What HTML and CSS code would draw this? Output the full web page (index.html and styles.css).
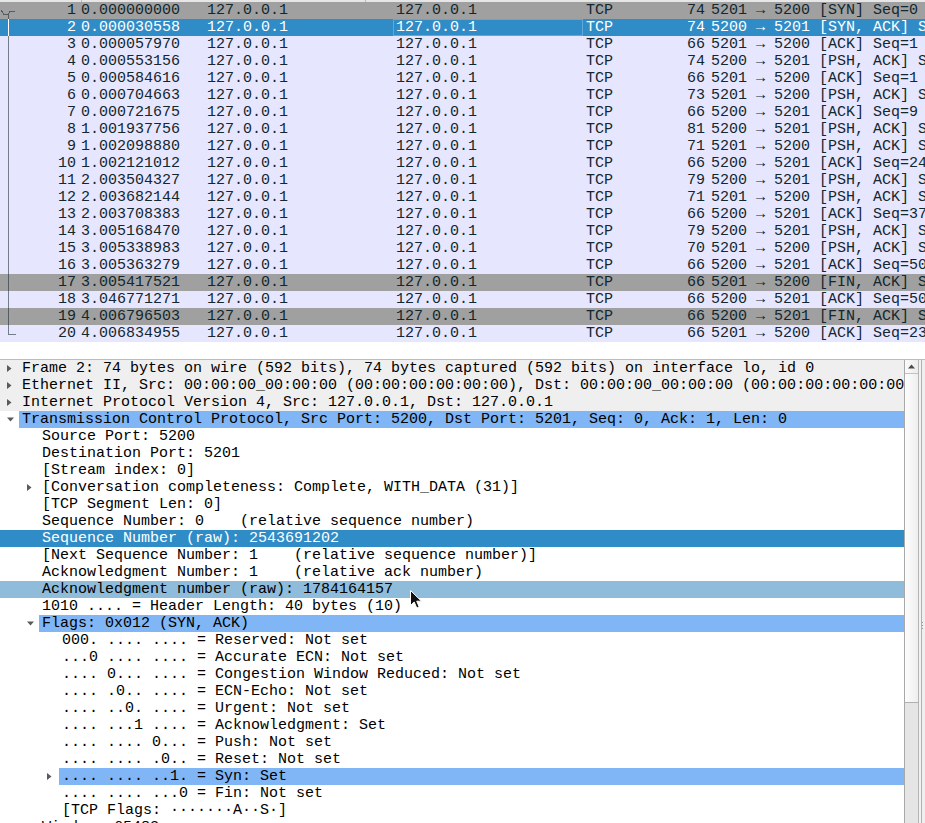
FILE: index.html
```html
<!DOCTYPE html>
<html>
<head>
<meta charset="utf-8">
<link rel="stylesheet" href="styles.css">
</head>
<body>
<div class="window">
  <div class="plist">
    <div class="phead"><span class="hs hs1"></span><span class="hs hs2"></span></div>
    <div class="prow gray"><span class="c no"><svg class="mk" width="16" height="17"><path d="M1,8 L4,12.5 L8,12.5 L10,9 L15,9 M8,12.5 L8,17"/></svg><span>1</span></span><span class="c">0.000000000</span><span class="c">127.0.0.1</span><span class="c">127.0.0.1</span><span class="c">TCP</span><span class="c len">74</span><span class="c">5201 → 5200 [SYN] Seq=0 Win=65495 Len=0 MSS=65495</span></div>
    <div class="prow sel"><span class="c no"><svg class="mk" width="16" height="17"><path d="M8,0 L8,17"/></svg><span>2</span></span><span class="c">0.000030558</span><span class="c">127.0.0.1</span><span class="c focus">127.0.0.1</span><span class="c">TCP</span><span class="c len">74</span><span class="c">5200 → 5201 [SYN, ACK] Seq=0 Ack=1 Win=65483 Len=0</span></div>
    <div class="prow"><span class="c no"><svg class="mk" width="16" height="17"><path d="M8,0 L8,17"/></svg><span>3</span></span><span class="c">0.000057970</span><span class="c">127.0.0.1</span><span class="c">127.0.0.1</span><span class="c">TCP</span><span class="c len">66</span><span class="c">5201 → 5200 [ACK] Seq=1 Ack=1 Win=65536 Len=0</span></div>
    <div class="prow"><span class="c no"><svg class="mk" width="16" height="17"><path d="M8,0 L8,17"/></svg><span>4</span></span><span class="c">0.000553156</span><span class="c">127.0.0.1</span><span class="c">127.0.0.1</span><span class="c">TCP</span><span class="c len">74</span><span class="c">5200 → 5201 [PSH, ACK] Seq=1 Ack=1 Win=65536 Len=8</span></div>
    <div class="prow"><span class="c no"><svg class="mk" width="16" height="17"><path d="M8,0 L8,17"/></svg><span>5</span></span><span class="c">0.000584616</span><span class="c">127.0.0.1</span><span class="c">127.0.0.1</span><span class="c">TCP</span><span class="c len">66</span><span class="c">5201 → 5200 [ACK] Seq=1 Ack=9 Win=65536 Len=0</span></div>
    <div class="prow"><span class="c no"><svg class="mk" width="16" height="17"><path d="M8,0 L8,17"/></svg><span>6</span></span><span class="c">0.000704663</span><span class="c">127.0.0.1</span><span class="c">127.0.0.1</span><span class="c">TCP</span><span class="c len">73</span><span class="c">5201 → 5200 [PSH, ACK] Seq=1 Ack=9 Win=65536 Len=7</span></div>
    <div class="prow"><span class="c no"><svg class="mk" width="16" height="17"><path d="M8,0 L8,17"/></svg><span>7</span></span><span class="c">0.000721675</span><span class="c">127.0.0.1</span><span class="c">127.0.0.1</span><span class="c">TCP</span><span class="c len">66</span><span class="c">5200 → 5201 [ACK] Seq=9 Ack=8 Win=65536 Len=0</span></div>
    <div class="prow"><span class="c no"><svg class="mk" width="16" height="17"><path d="M8,0 L8,17"/></svg><span>8</span></span><span class="c">1.001937756</span><span class="c">127.0.0.1</span><span class="c">127.0.0.1</span><span class="c">TCP</span><span class="c len">81</span><span class="c">5200 → 5201 [PSH, ACK] Seq=9 Ack=8 Win=65536 Len=15</span></div>
    <div class="prow"><span class="c no"><svg class="mk" width="16" height="17"><path d="M8,0 L8,17"/></svg><span>9</span></span><span class="c">1.002098880</span><span class="c">127.0.0.1</span><span class="c">127.0.0.1</span><span class="c">TCP</span><span class="c len">71</span><span class="c">5201 → 5200 [PSH, ACK] Seq=8 Ack=24 Win=65536 Len=5</span></div>
    <div class="prow"><span class="c no"><svg class="mk" width="16" height="17"><path d="M8,0 L8,17"/></svg><span>10</span></span><span class="c">1.002121012</span><span class="c">127.0.0.1</span><span class="c">127.0.0.1</span><span class="c">TCP</span><span class="c len">66</span><span class="c">5200 → 5201 [ACK] Seq=24 Ack=13 Win=65536 Len=0</span></div>
    <div class="prow"><span class="c no"><svg class="mk" width="16" height="17"><path d="M8,0 L8,17"/></svg><span>11</span></span><span class="c">2.003504327</span><span class="c">127.0.0.1</span><span class="c">127.0.0.1</span><span class="c">TCP</span><span class="c len">79</span><span class="c">5200 → 5201 [PSH, ACK] Seq=24 Ack=13 Win=65536 Len=13</span></div>
    <div class="prow"><span class="c no"><svg class="mk" width="16" height="17"><path d="M8,0 L8,17"/></svg><span>12</span></span><span class="c">2.003682144</span><span class="c">127.0.0.1</span><span class="c">127.0.0.1</span><span class="c">TCP</span><span class="c len">71</span><span class="c">5201 → 5200 [PSH, ACK] Seq=13 Ack=37 Win=65536 Len=5</span></div>
    <div class="prow"><span class="c no"><svg class="mk" width="16" height="17"><path d="M8,0 L8,17"/></svg><span>13</span></span><span class="c">2.003708383</span><span class="c">127.0.0.1</span><span class="c">127.0.0.1</span><span class="c">TCP</span><span class="c len">66</span><span class="c">5200 → 5201 [ACK] Seq=37 Ack=18 Win=65536 Len=0</span></div>
    <div class="prow"><span class="c no"><svg class="mk" width="16" height="17"><path d="M8,0 L8,17"/></svg><span>14</span></span><span class="c">3.005168470</span><span class="c">127.0.0.1</span><span class="c">127.0.0.1</span><span class="c">TCP</span><span class="c len">79</span><span class="c">5200 → 5201 [PSH, ACK] Seq=37 Ack=18 Win=65536 Len=13</span></div>
    <div class="prow"><span class="c no"><svg class="mk" width="16" height="17"><path d="M8,0 L8,17"/></svg><span>15</span></span><span class="c">3.005338983</span><span class="c">127.0.0.1</span><span class="c">127.0.0.1</span><span class="c">TCP</span><span class="c len">70</span><span class="c">5201 → 5200 [PSH, ACK] Seq=18 Ack=50 Win=65536 Len=4</span></div>
    <div class="prow"><span class="c no"><svg class="mk" width="16" height="17"><path d="M8,0 L8,17"/></svg><span>16</span></span><span class="c">3.005363279</span><span class="c">127.0.0.1</span><span class="c">127.0.0.1</span><span class="c">TCP</span><span class="c len">66</span><span class="c">5200 → 5201 [ACK] Seq=50 Ack=22 Win=65536 Len=0</span></div>
    <div class="prow gray"><span class="c no"><svg class="mk" width="16" height="17"><path d="M8,0 L8,17"/></svg><span>17</span></span><span class="c">3.005417521</span><span class="c">127.0.0.1</span><span class="c">127.0.0.1</span><span class="c">TCP</span><span class="c len">66</span><span class="c">5201 → 5200 [FIN, ACK] Seq=22 Ack=50 Win=65536 Len=0</span></div>
    <div class="prow"><span class="c no"><svg class="mk" width="16" height="17"><path d="M8,0 L8,17"/></svg><span>18</span></span><span class="c">3.046771271</span><span class="c">127.0.0.1</span><span class="c">127.0.0.1</span><span class="c">TCP</span><span class="c len">66</span><span class="c">5200 → 5201 [ACK] Seq=50 Ack=23 Win=65536 Len=0</span></div>
    <div class="prow gray"><span class="c no"><svg class="mk" width="16" height="17"><path d="M8,0 L8,17"/></svg><span>19</span></span><span class="c">4.006796503</span><span class="c">127.0.0.1</span><span class="c">127.0.0.1</span><span class="c">TCP</span><span class="c len">66</span><span class="c">5200 → 5201 [FIN, ACK] Seq=50 Ack=23 Win=65536 Len=0</span></div>
    <div class="prow"><span class="c no"><svg class="mk" width="16" height="17"><path d="M8,0 L8,9 L16,9"/></svg><span>20</span></span><span class="c">4.006834955</span><span class="c">127.0.0.1</span><span class="c">127.0.0.1</span><span class="c">TCP</span><span class="c len">66</span><span class="c">5201 → 5200 [ACK] Seq=23 Ack=51 Win=65536 Len=0</span></div>
  </div>

  <div class="details">
    <div class="tree">
      <div class="trow top"><span class="exp"><svg class="ar" width="5" height="7"><path d="M0,0 L4.5,3.5 L0,7 Z"/></svg></span><span class="cell">Frame 2: 74 bytes on wire (592 bits), 74 bytes captured (592 bits) on interface lo, id 0</span></div>
      <div class="trow top"><span class="exp"><svg class="ar" width="5" height="7"><path d="M0,0 L4.5,3.5 L0,7 Z"/></svg></span><span class="cell">Ethernet II, Src: 00:00:00_00:00:00 (00:00:00:00:00:00), Dst: 00:00:00_00:00:00 (00:00:00:00:00:00)</span></div>
      <div class="trow top"><span class="exp"><svg class="ar" width="5" height="7"><path d="M0,0 L4.5,3.5 L0,7 Z"/></svg></span><span class="cell">Internet Protocol Version 4, Src: 127.0.0.1, Dst: 127.0.0.1</span></div>
      <div class="trow hl"><span class="exp"><svg class="ar" width="7" height="5"><path d="M0,0.5 L7,0.5 L3.5,4.5 Z"/></svg></span><span class="cell">Transmission Control Protocol, Src Port: 5200, Dst Port: 5201, Seq: 0, Ack: 1, Len: 0</span></div>
      <div class="trow"><span class="ind l1"></span><span class="exp"></span><span class="cell">Source Port: 5200</span></div>
      <div class="trow"><span class="ind l1"></span><span class="exp"></span><span class="cell">Destination Port: 5201</span></div>
      <div class="trow"><span class="ind l1"></span><span class="exp"></span><span class="cell">[Stream index: 0]</span></div>
      <div class="trow"><span class="ind l1"></span><span class="exp"><svg class="ar" width="5" height="7"><path d="M0,0 L4.5,3.5 L0,7 Z"/></svg></span><span class="cell">[Conversation completeness: Complete, WITH_DATA (31)]</span></div>
      <div class="trow"><span class="ind l1"></span><span class="exp"></span><span class="cell">[TCP Segment Len: 0]</span></div>
      <div class="trow"><span class="ind l1"></span><span class="exp"></span><span class="cell">Sequence Number: 0    (relative sequence number)</span></div>
      <div class="trow sel"><span class="ind l1"></span><span class="exp"></span><span class="cell">Sequence Number (raw): 2543691202</span></div>
      <div class="trow"><span class="ind l1"></span><span class="exp"></span><span class="cell">[Next Sequence Number: 1    (relative sequence number)]</span></div>
      <div class="trow"><span class="ind l1"></span><span class="exp"></span><span class="cell">Acknowledgment Number: 1    (relative ack number)</span></div>
      <div class="trow hover"><span class="ind l1"></span><span class="exp"></span><span class="cell">Acknowledgment number (raw): 1784164157</span></div>
      <div class="trow"><span class="ind l1"></span><span class="exp"></span><span class="cell">1010 .... = Header Length: 40 bytes (10)</span></div>
      <div class="trow hl"><span class="ind l1"></span><span class="exp"><svg class="ar" width="7" height="5"><path d="M0,0.5 L7,0.5 L3.5,4.5 Z"/></svg></span><span class="cell">Flags: 0x012 (SYN, ACK)</span></div>
      <div class="trow"><span class="ind l2"></span><span class="exp"></span><span class="cell">000. .... .... = Reserved: Not set</span></div>
      <div class="trow"><span class="ind l2"></span><span class="exp"></span><span class="cell">...0 .... .... = Accurate ECN: Not set</span></div>
      <div class="trow"><span class="ind l2"></span><span class="exp"></span><span class="cell">.... 0... .... = Congestion Window Reduced: Not set</span></div>
      <div class="trow"><span class="ind l2"></span><span class="exp"></span><span class="cell">.... .0.. .... = ECN-Echo: Not set</span></div>
      <div class="trow"><span class="ind l2"></span><span class="exp"></span><span class="cell">.... ..0. .... = Urgent: Not set</span></div>
      <div class="trow"><span class="ind l2"></span><span class="exp"></span><span class="cell">.... ...1 .... = Acknowledgment: Set</span></div>
      <div class="trow"><span class="ind l2"></span><span class="exp"></span><span class="cell">.... .... 0... = Push: Not set</span></div>
      <div class="trow"><span class="ind l2"></span><span class="exp"></span><span class="cell">.... .... .0.. = Reset: Not set</span></div>
      <div class="trow hl"><span class="ind l2"></span><span class="exp"><svg class="ar" width="5" height="7"><path d="M0,0 L4.5,3.5 L0,7 Z"/></svg></span><span class="cell">.... .... ..1. = Syn: Set</span></div>
      <div class="trow"><span class="ind l2"></span><span class="exp"></span><span class="cell">.... .... ...0 = Fin: Not set</span></div>
      <div class="trow"><span class="ind l2"></span><span class="exp"></span><span class="cell">[TCP Flags: ·······A··S·]</span></div>
      <div class="trow"><span class="ind l1"></span><span class="exp"></span><span class="cell">Window: 65483</span></div>
    </div>
    <div class="vscroll">
      <div class="sbtn"><svg width="7" height="5"><path d="M0,4.5 L7,4.5 L3.5,0.5 Z"/></svg></div>
      <div class="thumb"></div>
      <div class="track"></div>
    </div>
    <div class="gap"></div>
    <div class="side"><span class="grip"></span></div>
  </div>

  <svg class="cursor" width="13" height="20" viewBox="0 0 13 20"><path d="M0.5,0.5 L0.5,15.5 L4.2,12 L6.8,18 L9.2,17 L6.7,11.2 L11.5,11.2 Z"/></svg>
</div>
</body>
</html>
```

FILE: styles.css
```css
html, body {
  margin: 0;
  padding: 0;
  background: #ffffff;
}

body {
  width: 925px;
  height: 823px;
  overflow: hidden;
  font-family: "Liberation Mono", "DejaVu Sans Mono", monospace;
  font-size: 15px;
  line-height: 17px;
}

.window {
  position: relative;
  width: 925px;
  height: 823px;
  display: flex;
  flex-direction: column;
}

/* ---------- packet list ---------- */
.plist {
  height: 359px;
  flex: none;
  background: #ffffff;
  overflow: hidden;
}

.phead {
  height: 2px;
  background: #e6e6e6;
  display: flex;
}

.hs {
  height: 2px;
  border-right: 1px solid #b8b8b8;
}

.hs1 { width: 81px; }
.hs2 { width: 283px; }

.prow {
  display: grid;
  grid-template-columns: 78px 126px 189px 190px 67px 58px minmax(0, 1fr);
  height: 17px;
  background: #e7e6ff;
  color: #12272e;
  white-space: pre;
}

.prow.gray {
  background: #a0a0a0;
}

.prow.sel {
  background: #308cc6;
  color: #ffffff;
}

.c {
  overflow: hidden;
  padding-left: 3px;
  min-width: 0;
}

.c.no {
  display: flex;
  justify-content: space-between;
  padding: 0 2px 0 0;
}

.c.len {
  text-align: right;
  padding: 0 3px 0 0;
}

.c.focus {
  box-shadow: inset 0 0 0 1px #5fa8da;
}

.mk {
  flex: none;
  fill: none;
  stroke: currentColor;
  stroke-opacity: 0.55;
  stroke-width: 1;
  shape-rendering: crispEdges;
}

.prow.sel .mk {
  stroke-opacity: 1;
}

/* ---------- details tree ---------- */
.details {
  flex: 1;
  display: flex;
  border-top: 1px solid #bdbdbd;
  min-height: 0;
}

.tree {
  width: 904px;
  flex: none;
  overflow: hidden;
  color: #000000;
}

.trow {
  display: flex;
  height: 17px;
  white-space: pre;
}

.trow.top {
  background: #efefef;
}

.trow.hl .cell {
  background: #80b6f5;
}

.trow.sel {
  background: #308cc6;
  color: #ffffff;
}

.trow.hover {
  background: #8fbcdb;
}

.ind {
  flex: none;
}

.ind.l1 { width: 20px; }
.ind.l2 { width: 40px; }

.exp {
  width: 19px;
  flex: none;
  display: flex;
  align-items: center;
  padding-left: 7px;
  box-sizing: border-box;
}

.ar {
  fill: #5a5a5a;
}

.cell {
  flex: 1;
  min-width: 0;
  overflow: hidden;
  padding-left: 3px;
}

/* ---------- scrollbar ---------- */
.vscroll {
  width: 13px;
  flex: none;
  border-left: 1px solid #a8a8a8;
  border-right: 1px solid #b4b4b4;
  background: #e4e4e4;
  display: flex;
  flex-direction: column;
}

.sbtn {
  height: 13px;
  flex: none;
  border-bottom: 1px solid #c2c2c2;
  background: linear-gradient(to right, #fafafa, #ececec);
  display: flex;
  align-items: center;
  justify-content: center;
}

.sbtn svg {
  fill: #4a4a4a;
}

.thumb {
  height: 328px;
  flex: none;
  background: linear-gradient(to right, #fdfdfd, #eeeeee);
  border-bottom: 1px solid #b0b0b0;
}

.track {
  flex: 1;
  background: #e5e5e5;
}

.gap {
  width: 2px;
  flex: none;
  background: #f2f2f2;
}

.side {
  flex: 1;
  border-left: 1px solid #b0b0b0;
  background: #efefef;
  position: relative;
}

.grip {
  position: absolute;
  left: 0;
  top: 262px;
  width: 1px;
  height: 8px;
  background: repeating-linear-gradient(to bottom, #9a9a9a 0 1px, transparent 1px 3px);
}

/* ---------- mouse cursor overlay ---------- */
.cursor {
  position: absolute;
  left: 410px;
  top: 590px;
  fill: #111111;
  stroke: #ffffff;
  stroke-width: 1;
}
```
